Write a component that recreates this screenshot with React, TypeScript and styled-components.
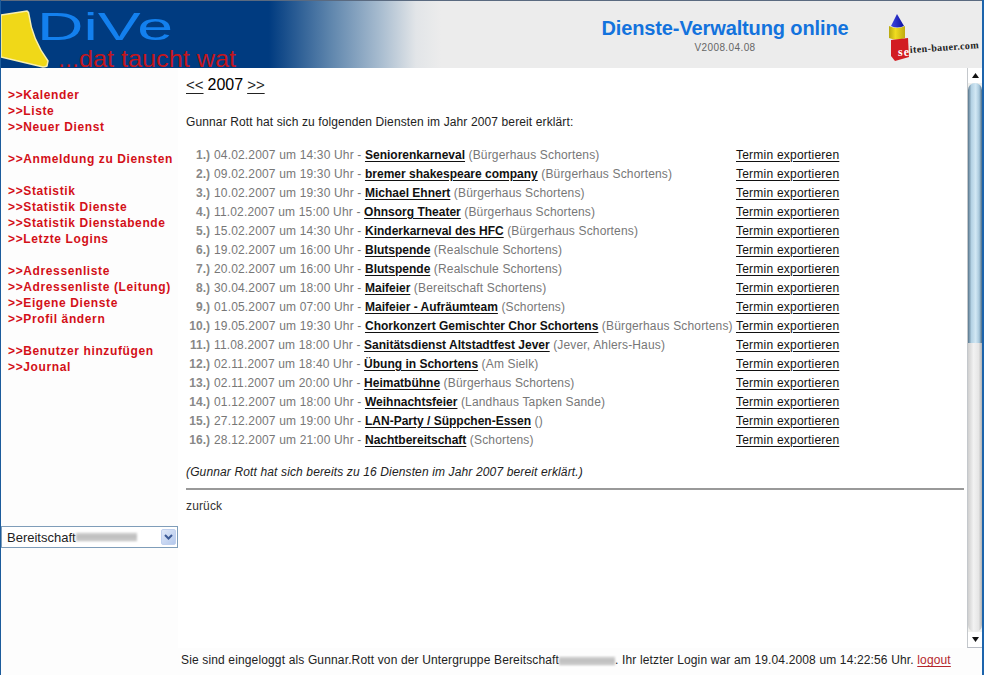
import React from "react"
import styled, { createGlobalStyle } from "styled-components"

const GlobalStyle = createGlobalStyle`
  html, body {
    margin: 0;
    padding: 0;
    background: #fff;
  }
  * {
    box-sizing: border-box;
  }
`

const Page = styled.div`
  display: flex;
  flex-direction: column;
  width: 984px;
  height: 675px;
  overflow: hidden;
  background: #fff;
  border-left: 1px solid #1c5c9c;
  border-right: 2px solid #1c64ac;
  font-family: "Liberation Sans", Arial, sans-serif;
  font-size: 12px;
  color: #222;
`

const Banner = styled.header`
  display: flex;
  align-items: stretch;
  flex: 0 0 68px;
  border-top: 1px solid #5a6a80;
  background: linear-gradient(90deg, #003b80 0, #003b80 268px, #5f86ad 330px, #a9bdd0 380px, #e2e5e8 415px, #ececec 440px, #ececec 100%);
`

const LogoArt = styled.svg`
  display: block;
  flex: 0 0 260px;
  height: 67px;
  overflow: visible;
`

const TitleBlock = styled.div`
  display: flex;
  flex-direction: column;
  align-items: center;
  width: 260px;
  margin-left: 335px;
  padding-top: 15px;
`

const Title = styled.div`
  color: #1373dd;
  font-size: 20px;
  font-weight: bold;
  letter-spacing: -0.12px;
  line-height: 24px;
`

const Version = styled.div`
  color: #666;
  font-size: 10px;
  letter-spacing: 0.4px;
  line-height: 12px;
  margin-top: 2px;
`

const BuilderArt = styled.svg`
  display: block;
  width: 94px;
  height: 50px;
  margin-left: 34px;
  margin-top: 11px;
  overflow: visible;
`

const Body = styled.div`
  display: flex;
  flex: 1;
  min-height: 0;
`

const Sidebar = styled.nav`
  display: flex;
  flex-direction: column;
  flex: 0 0 177px;
  padding: 19px 0 0 7px;
  background: #fdfdfd;
`

const MenuGroup = styled.div`
  display: flex;
  flex-direction: column;
  margin-bottom: 16px;
`

const MenuLink = styled.a`
  color: #d31018;
  font-size: 12px;
  font-weight: bold;
  letter-spacing: 0.62px;
  line-height: 16px;
  white-space: nowrap;
`

const GroupSelect = styled.div`
  display: flex;
  align-items: center;
  width: 177px;
  height: 22px;
  margin: 135px 0 0 -7px;
  padding: 0 1px 0 5px;
  background: #fff;
  border: 1px solid #7f9db9;
  font-size: 13px;
  color: #222;
`

const SelectArrow = styled.span`
  display: flex;
  align-items: center;
  justify-content: center;
  width: 15px;
  height: 16px;
  margin-left: auto;
  background: linear-gradient(135deg, #dfe8f8, #b4c8ec);
  border: 1px solid #c0d0ee;
  border-radius: 2px;
`

const Blurred = styled.span<{ $width: number }>`
  display: inline-block;
  width: ${(props) => props.$width}px;
  height: 8px;
  background: repeating-linear-gradient(180deg, #b4b4b4 0, #d8d8d8 2px, #a8a8a8 4px);
  filter: blur(1px);
  vertical-align: -1px;
`

const Main = styled.main`
  display: flex;
  flex-direction: column;
  flex: 1;
  min-width: 0;
`

const ScrollArea = styled.div`
  display: flex;
  flex: 1;
  min-height: 0;
`

const Content = styled.div`
  flex: 1;
  padding: 8px 3px 0 8px;
`

const YearRow = styled.div`
  display: flex;
  gap: 4px;
  height: 20px;
  color: #000;
  font-size: 16px;
  line-height: 18px;
`

const YearLink = styled.a`
  color: #222;
  font-size: 15px;
  text-decoration: underline;
  text-decoration-thickness: 1px;
  text-underline-offset: 3px;
`

const Intro = styled.p`
  margin: 19px 0 16px;
  color: #222;
  font-size: 12px;
  line-height: 14px;
  letter-spacing: 0.12px;
`

const DutyTable = styled.div`
  display: grid;
  grid-template-columns: 24px 526px auto;
  grid-auto-rows: 19px;
  align-items: center;
`

const RowNumber = styled.span`
  color: #888;
  font-weight: bold;
  text-align: right;
`

const RowText = styled.span`
  padding-left: 4px;
  color: #777;
  letter-spacing: 0.16px;
  white-space: nowrap;
`

const DutyName = styled.a`
  color: #111;
  font-weight: bold;
  letter-spacing: 0;
  text-decoration: underline;
  text-underline-offset: 2px;
`

const ExportLink = styled.a`
  color: #111;
  letter-spacing: 0.22px;
  text-decoration: underline;
  text-underline-offset: 2px;
  white-space: nowrap;
`

const Summary = styled.p`
  margin: 16px 0 9px;
  color: #222;
  font-style: italic;
  letter-spacing: 0.135px;
  line-height: 14px;
`

const Rule = styled.hr`
  height: 2px;
  margin: 0;
  border: 0;
  background: #999;
`

const BackLink = styled.a`
  display: block;
  margin-top: 9px;
  color: #333;
  letter-spacing: 0.15px;
  line-height: 14px;
`

const ScrollBar = styled.div`
  display: flex;
  flex-direction: column;
  flex: 0 0 15px;
  background: #f1f1ee;
  border-left: 1px solid #c4c8cc;
  border-bottom: 1px solid #b8bcc4;
`

const ScrollButton = styled.div`
  display: flex;
  align-items: center;
  justify-content: center;
  flex: 0 0 15px;
  background: #fff;
`

const ScrollThumb = styled.div`
  flex: 0 0 260px;
  background: linear-gradient(90deg, #58768c, #b4d2e4 25%, #d2e8f4 55%, #a8c8dc 80%, #4c6c86);
  border-radius: 7px 7px 0 0;
`

const ScrollTrack = styled.div`
  flex: 1;
  background: linear-gradient(90deg, #cfcfcf, #f2f2f2 40%, #e6e6e6 75%, #b4b4b4);
  border-radius: 0 0 7px 7px;
`

const Footer = styled.footer`
  flex: 0 0 27px;
  padding: 5px 0 0 3px;
  background: #fdfdfd;
  color: #222;
  font-size: 12px;
  letter-spacing: 0.145px;
  line-height: 15px;
  white-space: nowrap;
`

const LogoutLink = styled.a`
  color: #b5262c;
  text-decoration: underline;
  text-underline-offset: 2px;
`

type Duty = {
  date: string
  time: string
  name: string
  place: string
}

const menuGroups = [
  ["Kalender", "Liste", "Neuer Dienst"],
  ["Anmeldung zu Diensten"],
  ["Statistik", "Statistik Dienste", "Statistik Dienstabende", "Letzte Logins"],
  ["Adressenliste", "Adressenliste (Leitung)", "Eigene Dienste", "Profil ändern"],
  ["Benutzer hinzufügen", "Journal"],
]

const duties: Duty[] = [
  { date: "04.02.2007", time: "14:30", name: "Seniorenkarneval", place: "(Bürgerhaus Schortens)" },
  { date: "09.02.2007", time: "19:30", name: "bremer shakespeare company", place: "(Bürgerhaus Schortens)" },
  { date: "10.02.2007", time: "19:30", name: "Michael Ehnert", place: "(Bürgerhaus Schortens)" },
  { date: "11.02.2007", time: "15:00", name: "Ohnsorg Theater", place: "(Bürgerhaus Schortens)" },
  { date: "15.02.2007", time: "14:30", name: "Kinderkarneval des HFC", place: "(Bürgerhaus Schortens)" },
  { date: "19.02.2007", time: "16:00", name: "Blutspende", place: "(Realschule Schortens)" },
  { date: "20.02.2007", time: "16:00", name: "Blutspende", place: "(Realschule Schortens)" },
  { date: "30.04.2007", time: "18:00", name: "Maifeier", place: "(Bereitschaft Schortens)" },
  { date: "01.05.2007", time: "07:00", name: "Maifeier - Aufräumteam", place: "(Schortens)" },
  { date: "19.05.2007", time: "19:30", name: "Chorkonzert Gemischter Chor Schortens", place: "(Bürgerhaus Schortens)" },
  { date: "11.08.2007", time: "18:00", name: "Sanitätsdienst Altstadtfest Jever", place: "(Jever, Ahlers-Haus)" },
  { date: "02.11.2007", time: "18:40", name: "Übung in Schortens", place: "(Am Sielk)" },
  { date: "02.11.2007", time: "20:00", name: "Heimatbühne", place: "(Bürgerhaus Schortens)" },
  { date: "01.12.2007", time: "18:00", name: "Weihnachtsfeier", place: "(Landhaus Tapken Sande)" },
  { date: "27.12.2007", time: "19:00", name: "LAN-Party / Süppchen-Essen", place: "()" },
  { date: "28.12.2007", time: "21:00", name: "Nachtbereitschaft", place: "(Schortens)" },
]

function DiveLogo() {
  return (
    <LogoArt viewBox="0 0 260 67">
      <path
        d="M0 14 L26 10 Q28 11 28 14 Q31 38 47 60 L46 65 Q44 66 42 66 L0 56 Z"
        fill="#f0d818"
        stroke="#f8f0b0"
        strokeWidth="1.5"
      />
      <text
        x="36"
        y="39"
        fill="#1380ee"
        fontFamily="Liberation Sans"
        fontSize="39"
        textLength="136"
        lengthAdjust="spacingAndGlyphs"
      >
        DiVe
      </text>
      <text
        x="57"
        y="66"
        fill="#c4161c"
        fontFamily="Liberation Sans"
        fontSize="24"
        textLength="178"
        lengthAdjust="spacingAndGlyphs"
      >
        ...dat taucht wat
      </text>
    </LogoArt>
  )
}

function BuilderLogo() {
  return (
    <BuilderArt viewBox="0 0 94 50">
      <defs>
        <linearGradient id="cylinder" x1="0" y1="0" x2="1" y2="0">
          <stop offset="0" stopColor="#b8a810" />
          <stop offset="0.4" stopColor="#f0dc20" />
          <stop offset="1" stopColor="#c0ac10" />
        </linearGradient>
        <linearGradient id="cone" x1="0" y1="0" x2="1" y2="0">
          <stop offset="0" stopColor="#3c46e0" />
          <stop offset="1" stopColor="#0c10a0" />
        </linearGradient>
      </defs>
      <path d="M9 2 L16 14 Q9 17 3 14 Z" fill="url(#cone)" />
      <path d="M1 14 Q9 18 17 14 L17 26 Q9 29 1 26 Z" fill="url(#cylinder)" />
      <path d="M3 28 L20 26 L21 45 L7 49 L3 44 Z" fill="#d21c22" />
      <text
        x="10"
        y="44"
        fill="#fff"
        fontFamily="Liberation Serif"
        fontSize="12"
        fontWeight="bold"
        textLength="11"
      >
        se
      </text>
      <text
        x="22"
        y="41"
        fill="#222"
        fontFamily="Liberation Serif"
        fontSize="10"
        fontWeight="bold"
        textLength="69"
        transform="rotate(-4 22 41)"
      >
        iten-bauer.com
      </text>
    </BuilderArt>
  )
}

function ScrollArrow({ down }: { down?: boolean }) {
  return (
    <svg width="7" height="5" viewBox="0 0 7 5">
      <path d={down ? "M0 0 H7 L3.5 5 Z" : "M0 5 H7 L3.5 0 Z"} fill="#111" />
    </svg>
  )
}

function App() {
  return (
    <Page>
      <GlobalStyle />
      <Banner>
        <DiveLogo />
        <TitleBlock>
          <Title>Dienste-Verwaltung online</Title>
          <Version>V2008.04.08</Version>
        </TitleBlock>
        <BuilderLogo />
      </Banner>
      <Body>
        <Sidebar>
          {menuGroups.map((group) => (
            <MenuGroup key={group[0]}>
              {group.map((item) => (
                <MenuLink key={item}>&gt;&gt;{item}</MenuLink>
              ))}
            </MenuGroup>
          ))}
          <GroupSelect>
            Bereitschaft
            <Blurred $width={61} />
            <SelectArrow>
              <svg width="9" height="6" viewBox="0 0 9 6">
                <path d="M1 1 L4.5 4.5 L8 1" fill="none" stroke="#3c5a96" strokeWidth="2" />
              </svg>
            </SelectArrow>
          </GroupSelect>
        </Sidebar>
        <Main>
          <ScrollArea>
            <Content>
              <YearRow>
                <YearLink>&lt;&lt;</YearLink>
                <span>2007</span>
                <YearLink>&gt;&gt;</YearLink>
              </YearRow>
              <Intro>Gunnar Rott hat sich zu folgenden Diensten im Jahr 2007 bereit erklärt:</Intro>
              <DutyTable>
                {duties.map((duty, index) => (
                  <React.Fragment key={index}>
                    <RowNumber>{index + 1}.)</RowNumber>
                    <RowText>
                      {duty.date} um {duty.time} Uhr - <DutyName>{duty.name}</DutyName> {duty.place}
                    </RowText>
                    <ExportLink>Termin exportieren</ExportLink>
                  </React.Fragment>
                ))}
              </DutyTable>
              <Summary>(Gunnar Rott hat sich bereits zu 16 Diensten im Jahr 2007 bereit erklärt.)</Summary>
              <Rule />
              <BackLink>zurück</BackLink>
            </Content>
            <ScrollBar>
              <ScrollButton>
                <ScrollArrow />
              </ScrollButton>
              <ScrollThumb />
              <ScrollTrack />
              <ScrollButton>
                <ScrollArrow down />
              </ScrollButton>
            </ScrollBar>
          </ScrollArea>
          <Footer>
            Sie sind eingeloggt als Gunnar.Rott von der Untergruppe Bereitschaft
            <Blurred $width={56} />. Ihr letzter Login war am 19.04.2008 um 14:22:56 Uhr.{" "}
            <LogoutLink>logout</LogoutLink>
          </Footer>
        </Main>
      </Body>
    </Page>
  )
}

export default App
